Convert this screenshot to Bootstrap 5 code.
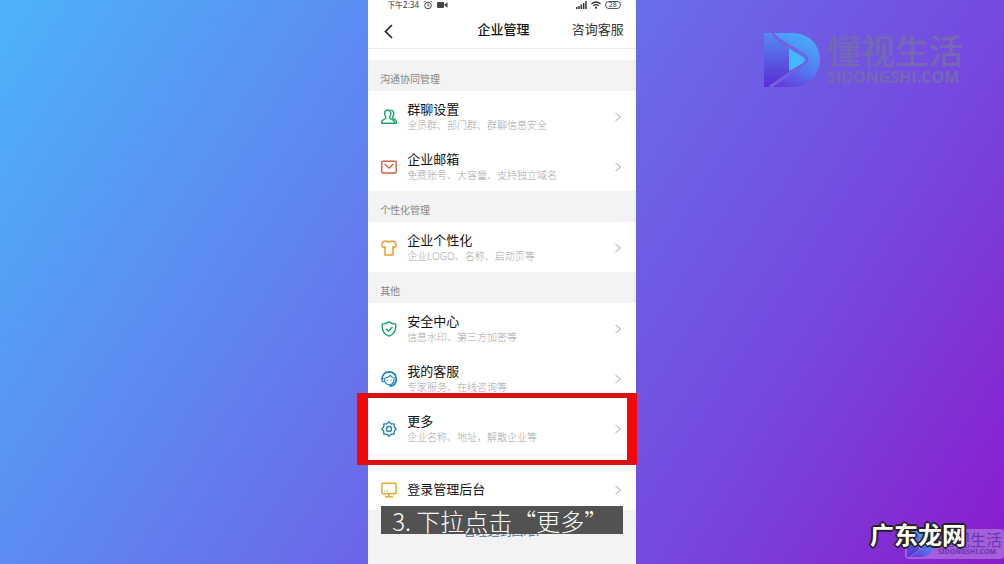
<!DOCTYPE html>
<html lang="zh-CN">
<head>
<meta charset="utf-8">
<meta name="viewport" content="width=device-width, initial-scale=1">
<title>企业管理</title>
<link href="https://cdn.jsdelivr.net/npm/bootstrap@5.3.0/dist/css/bootstrap.min.css" rel="stylesheet">
<style>
  body { font-family: "Noto Sans", "Noto Sans CJK SC", sans-serif; background: #6a6ae8; }
  .stage { display: grid; grid-template-columns: 11fr 8fr 11fr; min-height: 100vh;
    background: linear-gradient(123deg, #4db3fb 0%, #5a91f3 24%, #6a6ae8 50%, #7646de 76%, #8b1bcd 100%); }
  .phone { background: #f3f3f3; color: #111; }
  .status-line { height: 12px; padding: 0 15px 2px 19px; font-size: 8px; line-height: 10px; color: #333; }
  .charge { border: 1px solid #555; font-size: 7px; line-height: 6px; padding: 0 3px; }
  .top-line { height: 37px; padding: 0 12px 0 15px; border-bottom: 1px solid #ececec; font-size: 13px; }
  .top-line > * { flex: 1 1 0; }
  .top-line h1 { font-size: 13px; font-weight: 500; }
  .top-line a { color: #333; }
  .back { line-height: 1; }
  .spacer { height: 11px; }
  .group-name { padding: 11px 12px 4px; font-size: 10px; line-height: 16px; font-weight: 400; color: #858585; margin: 0; }
  .entry { padding: 10px 14px 8px 13px; gap: 10px; background: #fff; color: #111; }
  .entry svg { flex: none; }
  .entry-title { font-size: 13px; line-height: 17px; }
  .entry-note { font-size: 10px; line-height: 15px; color: #a6a6a6; font-weight: 300; }
  .frame { position: absolute; inset: -10px -1px -12px -11px; border: solid #f20808; border-width: 5px 10px 5px 11px;
    border-top-color: #d51414; border-bottom-color: #d51414; pointer-events: none; z-index: 2; }
  .gap-line { height: 18px; background: #f9f9f9; }
  .entry.single { padding-top: 10px; padding-bottom: 12px; }
  .help { padding-top: 13px; font-size: 12px; line-height: 18px; }
  .help a { color: #4d6f9d; }
  .caption { position: absolute; top: -4px; left: 13px; right: 13px; height: 28px; padding-left: 11px; line-height: 30px;
    background: #525252; color: #fff; font-family: "Noto Sans CJK SC", sans-serif; font-size: 24px; font-weight: 300; white-space: nowrap; z-index: 3; }
  .side { padding: 33px 0 5px; }
  .brand { gap: 7px; margin-right: 41px; color: #7469b2; }
  .brand-name { font-size: 34px; line-height: 34px; font-weight: 500; }
  .brand-site { font-family: "Open Sans", sans-serif; font-size: 16px; line-height: 18px; font-weight: 700; }
  .mark-wrap { position: relative; }
  .mini { background: #a45fda; color: #6a35b4; border-radius: 4px; padding: 2px; gap: 4px; height: 30px; }
  .mini-name { font-size: 16px; line-height: 15px; }
  .mini-site { font-size: 7px; line-height: 8px; font-weight: 700; }
  .sign { position: absolute; right: 38px; bottom: 9px; color: #fff; font-size: 24px; line-height: 30px; font-weight: 700; white-space: nowrap;
    text-shadow: 2px 0 #222, -2px 0 #222, 0 2px #222, 0 -2px #222, 1px 1px #222, -1px -1px #222, 1px -1px #222, -1px 1px #222; }
</style>
</head>
<body>
<svg width="0" height="0" class="position-absolute" aria-hidden="true">
  <defs>
    <linearGradient id="edge" x1=".2" y1="1" x2=".6" y2="0">
      <stop offset="0" stop-color="#6438dc"/><stop offset=".45" stop-color="#5578f0"/><stop offset="1" stop-color="#48acf9"/>
    </linearGradient>
    <linearGradient id="spine" x1="0" y1="0" x2="0" y2="1">
      <stop offset="0" stop-color="#558af2"/><stop offset="1" stop-color="#5a2cd4"/>
    </linearGradient>
    <symbol id="logo" viewBox="0 0 56 54">
      <path d="M4 0h24C47 0 56 14 56 27S46 54 28 54H8l4-30z" fill="url(#edge)"/>
      <path d="M0 0h4L27 17v21L5 54H0z" fill="url(#spine)"/>
      <path d="M6 54 41 30q4-4 0-7L27 14Q16 9 8 0" fill="none" stroke="#7461e2" stroke-width="3"/>
      <path d="M25 16v22l14-8q4-3 0-6z" fill="#43b9fb"/>
    </symbol>
    <symbol id="next" viewBox="0 0 8 10"><path d="M1.500 1 6.500 5 1.500 9" fill="none" stroke="#c4c4c4" stroke-width="1.200"/></symbol>
  </defs>
</svg>
<div class="stage">
  <div></div>
  <main class="phone">
    <div class="status-line bg-white d-flex align-items-center justify-content-between">
      <div class="d-flex align-items-center gap-1">
        <span>下午2:34</span>
        <svg width="10" height="10" viewBox="0 0 10 10" fill="none" stroke="#444"><circle cx="5" cy="5.500" r="3.300"/><path d="M5 3.500v2l1.300.8M1 2.500 2.500 1M9 2.500 7.500 1"/></svg>
        <svg width="11" height="8" viewBox="0 0 11 8" fill="#444"><rect y="1" width="7" height="6" rx="1"/><path d="M7 4 10.500 1.200v5.600z"/></svg>
      </div>
      <div class="d-flex align-items-center gap-1">
        <svg width="11" height="8" viewBox="0 0 11 8" fill="#333"><path d="M0 6h1.500v2H0zM2.300 5h1.500v3H2.300zM4.600 3.500h1.500V8H4.600zM6.900 2h1.500v6H6.900zM9.200 0h1.500v8H9.200z"/></svg>
        <svg width="10" height="8" viewBox="0 0 10 8" fill="none" stroke="#333" stroke-width="1.200"><path d="M.5 3Q5-1 9.500 3M2.200 4.800Q5 2.500 7.800 4.800"/><circle cx="5" cy="6.700" r=".5"/></svg>
        <span class="charge rounded-pill">28</span>
      </div>
    </div>
    <header class="top-line d-flex align-items-center bg-white">
      <div><button type="button" class="back btn p-0 border-0" aria-label="返回"><svg width="11" height="15" viewBox="0 0 11 15"><path d="M9 1 2.500 7.500 9 14" fill="none" stroke="#222" stroke-width="1.700"/></svg></button></div>
      <h1 class="m-0 text-center">企业管理</h1>
      <a href="#" class="text-end text-decoration-none">咨询客服</a>
    </header>
    <div class="spacer bg-white"></div>

    <h2 class="group-name">沟通协同管理</h2>
    <a href="#" class="entry d-flex align-items-center text-decoration-none">
      <svg width="16" height="16" viewBox="0 0 16 16" fill="none" stroke="#18a866" stroke-width="1.400" stroke-linejoin="round"><path d="M6.500 1C3.800 1 3.500 3 3.700 5c.1 1.700.7 2.500 1.300 3.300.3 2-4.200 2-4.300 4.300v1.700h12.600v-1.700C13 10.300 8.300 10.300 8.500 8.300 9.300 7.500 9.700 6.500 9.800 5 10 2.500 9 1 6.500 1z"/><path d="M9.500 1.500c2.700-.5 3.500 1.500 3.200 3.700C12.500 7 11.200 8 11.500 9c.5 1 3.800 1.400 3.800 3.500v1.700h-2"/></svg>
      <span class="flex-grow-1"><span class="entry-title d-block">群聊设置</span><span class="entry-note d-block">全员群、部门群、群聊信息安全</span></span>
      <svg width="8" height="10"><use href="#next"/></svg>
    </a>
    <a href="#" class="entry d-flex align-items-center text-decoration-none">
      <svg width="16" height="16" viewBox="0 0 16 16" fill="none" stroke="#d2603e" stroke-width="1.400" stroke-linejoin="round"><rect x=".8" y="2.300" width="14.400" height="11.700" rx="1.200"/><path d="m3.500 5 4.500 4 4.500-4"/></svg>
      <span class="flex-grow-1"><span class="entry-title d-block">企业邮箱</span><span class="entry-note d-block">免费账号、大容量、支持独立域名</span></span>
      <svg width="8" height="10"><use href="#next"/></svg>
    </a>

    <h2 class="group-name">个性化管理</h2>
    <a href="#" class="entry d-flex align-items-center text-decoration-none">
      <svg width="16" height="16" viewBox="0 0 16 16" fill="none" stroke="#e9a02c" stroke-width="1.500" stroke-linejoin="round"><path d="M5 1Q8 2.500 11 1q3.800.5 4.200 3.500.2 2.500-1.700 3l-1.500-.7V15H4V6.800l-1.500.7Q.6 7 .8 4.500 1.200 1.500 5 1z"/></svg>
      <span class="flex-grow-1"><span class="entry-title d-block">企业个性化</span><span class="entry-note d-block">企业LOGO、名称、启动页等</span></span>
      <svg width="8" height="10"><use href="#next"/></svg>
    </a>

    <h2 class="group-name">其他</h2>
    <a href="#" class="entry d-flex align-items-center text-decoration-none">
      <svg width="16" height="16" viewBox="0 0 16 16" fill="none" stroke="#20a374" stroke-width="1.400" stroke-linejoin="round"><path d="M8 .8q3 2 6.800 2.300C15.300 9 13 13.300 8 15.200 3 13.300.7 9 1.200 3.100 5 2.800 8 .8 8 .8z"/><path d="m4.800 7.800 2.500 2.500 4.200-4.400"/></svg>
      <span class="flex-grow-1"><span class="entry-title d-block">安全中心</span><span class="entry-note d-block">信息水印、第三方加密等</span></span>
      <svg width="8" height="10"><use href="#next"/></svg>
    </a>
    <a href="#" class="entry d-flex align-items-center text-decoration-none">
      <svg width="16" height="16" viewBox="0 0 16 16" fill="none" stroke="#1b82c8" stroke-width="1.400" stroke-linejoin="round" stroke-linecap="round"><path d="M1.200 8.500C.8 4 4 .9 8.300.9c4.200 0 6.900 3.100 6.900 7.100 0 4-2.500 6.600-6 7.200" stroke-width="1.700"/><path d="M1 7.500v3q1.500.8 2-.3M3 7.300q4-.4 6.300-3 1 2 3.700 2.700.5 5-3.500 6.700C6 14.500 3.500 12 3 7.300zM6.300 9.300v.2M10 9.300v.2" stroke-width="1.100"/></svg>
      <span class="flex-grow-1"><span class="entry-title d-block">我的客服</span><span class="entry-note d-block">专家服务、在线咨询等</span></span>
      <svg width="8" height="10"><use href="#next"/></svg>
    </a>
    <div class="position-relative">
      <a href="#" class="entry d-flex align-items-center text-decoration-none">
        <svg width="16" height="16" viewBox="0 0 16 16" fill="none" stroke="#2c84ad" stroke-width="1.400" stroke-linejoin="round"><path d="M8 .8 10 2.700 13.100 2.900 13.300 6 15.200 8 13.300 10 13.100 13.100 10 13.300 8 15.200 6 13.300 2.900 13.100 2.700 10 .8 8 2.700 6 2.900 2.900 6 2.700z"/><circle cx="8" cy="8" r="2.500"/></svg>
        <span class="flex-grow-1"><span class="entry-title d-block">更多</span><span class="entry-note d-block">企业名称、地址，解散企业等</span></span>
        <svg width="8" height="10"><use href="#next"/></svg>
      </a>
      <div class="frame"></div>
    </div>
    <div class="gap-line"></div>
    <a href="#" class="entry single d-flex align-items-center text-decoration-none">
      <svg width="16" height="16" viewBox="0 0 16 16" fill="none" stroke="#e2ab2e" stroke-width="1.500" stroke-linejoin="round"><rect x=".8" y="1.200" width="14.400" height="10.500" rx="1.200"/><path d="M8 12v2.500M4 14.700h8M3.500 9h1M6 9h1"/></svg>
      <span class="entry-title flex-grow-1">登录管理后台</span>
      <svg width="8" height="10"><use href="#next"/></svg>
    </a>
    <div class="help position-relative text-center">
      <a href="#" class="text-decoration-none">管理遇到困难?</a>
      <div class="caption text-start">3. 下拉点击“更多”</div>
    </div>
  </main>
  <aside class="side d-flex flex-column justify-content-between align-items-end">
    <div class="brand d-flex align-items-center">
      <svg width="56" height="54"><use href="#logo"/></svg>
      <div><div class="brand-name">懂视生活</div><div class="brand-site">SIDONGSHI.COM</div></div>
    </div>
    <div class="mark-wrap">
      <div class="mini d-flex align-items-center">
        <svg width="27" height="26"><use href="#logo"/></svg>
        <div><div class="mini-name">懂视生活</div><div class="mini-site">SIDONGSHI.COM</div></div>
      </div>
      <div class="sign">广东龙网</div>
    </div>
  </aside>
</div>
<script src="https://cdn.jsdelivr.net/npm/bootstrap@5.3.0/dist/js/bootstrap.bundle.min.js"></script>
</body>
</html>
